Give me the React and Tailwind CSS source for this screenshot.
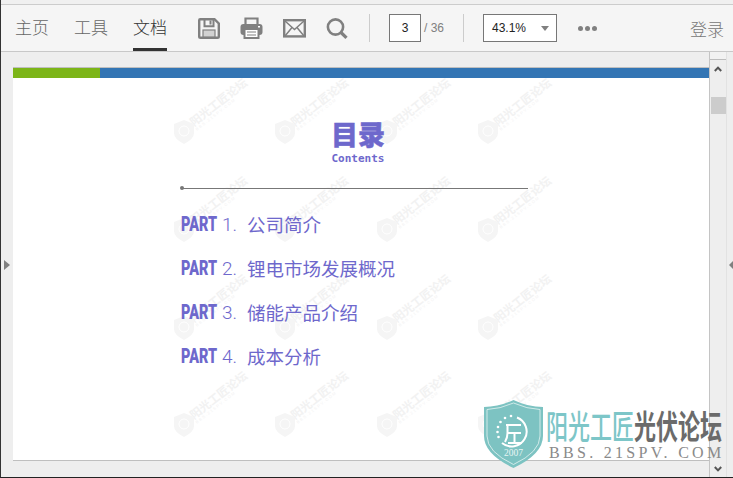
import React from "react";

const CJK = "font-['Noto_Sans_CJK_SC',sans-serif]";

const WATERMARK_X = [184, 285, 387, 488];
const WATERMARK_Y = [132, 230, 328, 425];

const ROWS = [
  { n: "1.", label: "公司简介" },
  { n: "2.", label: "锂电市场发展概况" },
  { n: "3.", label: "储能产品介绍" },
  { n: "4.", label: "成本分析" },
];

function SaveIcon() {
  return (
    <svg width="22" height="21" viewBox="0 0 22 21" fill="none" stroke="#808080" strokeWidth="2.4">
      <path d="M2.2 1.2H16.5L20.8 5.5V18.5Q20.8 19.8 19.5 19.8H2.5Q1.2 19.8 1.2 18.5V2.2Q1.2 1.2 2.2 1.2Z" />
      <path d="M6.5 1.5V8.2H15.5V1.5" strokeWidth="2" />
      <rect x="11.5" y="2.5" width="2" height="4" fill="#808080" stroke="none" />
      <rect x="5" y="12" width="12" height="7" fill="#d2d2d2" stroke="#808080" strokeWidth="1.2" />
    </svg>
  );
}

function PrintIcon() {
  return (
    <svg width="23" height="22" viewBox="0 0 23 22">
      <path d="M5.5 8V1.5H17.5V8" fill="none" stroke="#808080" strokeWidth="2.2" />
      <rect x="0.5" y="7" width="22" height="11" rx="3" fill="#808080" />
      <rect x="4.5" y="12" width="14" height="9" fill="#fff" stroke="#808080" strokeWidth="2" />
      <path d="M7 15H16M7 18H16" stroke="#808080" strokeWidth="1" />
      <rect x="18" y="9" width="2" height="1.5" fill="#fff" />
    </svg>
  );
}

function MailIcon() {
  return (
    <svg width="23" height="19" viewBox="0 0 23 19" fill="none" stroke="#808080">
      <rect x="1.2" y="1.2" width="20.6" height="16.2" strokeWidth="2.4" />
      <path d="M2 2L11.5 10.5L21 2M2 17L9 8.5M21 17L14 8.5" strokeWidth="1.5" />
    </svg>
  );
}

function SearchIcon() {
  return (
    <svg width="22" height="21" viewBox="0 0 22 21" fill="none" stroke="#808080">
      <circle cx="9.5" cy="9" r="7.6" strokeWidth="2.6" />
      <path d="M15 14.5L20.5 19.8" strokeWidth="3.2" />
    </svg>
  );
}

// x, y are the centre of the little shield, in page coordinates
function Watermark({ x, y }) {
  return (
    <div
      className="absolute flex items-center gap-[1px] rotate-[-38deg] origin-[10px_50%] text-[#f2f2f2]"
      style={{ left: x - 10, top: y - 12 }}
    >
      <svg width="20" height="24" viewBox="0 0 20 24" className="rotate-[38deg] shrink-0">
        <path d="M10 0L20 4V13Q20 19 10 24Q0 19 0 13V4Z" fill="#f5f5f5" />
        <circle cx="10" cy="11" r="5" fill="none" stroke="#fff" strokeWidth="1" />
      </svg>
      <div className="flex flex-col leading-none whitespace-nowrap">
        <span className={`text-[11.5px] font-bold ${CJK}`}>阳光工匠论坛</span>
        <span className="text-[4px] tracking-[1.4px] font-['Liberation_Sans',sans-serif]">BBS.21SPV.COM</span>
      </div>
    </div>
  );
}

function Logo() {
  return (
    <div className="absolute left-[483px] top-[400px] flex items-start">
      <svg width="59" height="68" viewBox="0 0 59 68" className="shrink-0">
        <path d="M29.5 0Q44 7 59 7V36Q59 54 29.5 68Q0 54 0 36V7Q15 7 29.5 0Z" fill="#7dc3c2" />
        <path d="M29.5 3Q43 9 56 9.5V36Q56 52 29.5 64.5Q3 52 3 36V9.5Q16 9 29.5 3Z" fill="none" stroke="#e6f4f3" strokeWidth="0.8" />
        <path d="M33 17.5A15 15 0 1 1 18 43" fill="none" stroke="#fff" strokeWidth="2" />
        <path d="M22 25H37M23.5 25V33Q23.5 38 21 42M23.5 33H37M30.5 33V43M24 43H38" fill="none" stroke="#fff" strokeWidth="2" />
        <g fill="#fff">
          <circle cx="27" cy="16" r="1.3" />
          <circle cx="21" cy="18" r="1.3" />
          <circle cx="16.5" cy="22" r="1.3" />
          <circle cx="14" cy="27" r="1.3" />
          <circle cx="13.5" cy="32" r="1.3" />
          <circle cx="14.5" cy="37" r="1.3" />
        </g>
        <text x="29.5" y="56" textAnchor="middle" fontSize="9.5" fill="#e8f5f4" fontFamily="Liberation Serif, serif">2007</text>
      </svg>
      <div className="ml-[3px] mt-[8px] flex flex-col">
        <div className={`flex h-[32px] items-center text-[22px] leading-none whitespace-nowrap scale-y-[1.5] origin-center ${CJK}`}>
          <span className="font-medium text-[#7dc6c8]">阳光工匠</span>
          <span className="font-bold text-[#6b6b6b]">光伏论坛</span>
        </div>
        <div className="mt-[7px] ml-[3px] font-['Liberation_Serif',serif] text-[16px] leading-[11px] tracking-[3.3px] text-[#8a8a8a] whitespace-nowrap">
          BBS. 21SPV. COM
        </div>
      </div>
    </div>
  );
}

function Toolbar() {
  return (
    <div className={`flex h-[47px] shrink-0 items-center border-b border-[#c8c8c8] bg-[#f5f5f5] pl-[14px] ${CJK}`}>
      <div className="flex h-full items-stretch gap-[25px] text-[17px] font-light leading-none">
        <div className="flex items-center border-b-[3px] border-transparent text-[#666]">主页</div>
        <div className="flex items-center border-b-[3px] border-transparent text-[#666]">工具</div>
        <div className="flex items-center border-b-[3px] border-[#333] text-[#333]">文档</div>
      </div>
      <div className="ml-[31px] flex items-center gap-[20px]">
        <SaveIcon />
        <PrintIcon />
        <MailIcon />
        <SearchIcon />
      </div>
      <div className="ml-[21px] h-[28px] w-px bg-[#ccc]" />
      <div className="ml-[19px] flex h-[28px] w-[32px] items-center justify-center border border-[#777] bg-white font-['Liberation_Sans',sans-serif] text-[12px] text-[#222]">
        3
      </div>
      <span className="ml-[3px] w-[21px] whitespace-nowrap font-['Liberation_Sans',sans-serif] text-[12px] text-[#808080]">/ 36</span>
      <div className="ml-[18px] h-[28px] w-px bg-[#ccc]" />
      <div className="ml-[19px] flex h-[28px] w-[74px] items-center justify-between border border-[#777] bg-white pl-[8px] pr-[7px] font-['Liberation_Sans',sans-serif] text-[12px] text-[#222]">
        43.1%
        <span className="h-0 w-0 border-x-[4px] border-t-[5px] border-x-transparent border-t-[#808080]" />
      </div>
      <div className="ml-[21px] flex gap-[2px]">
        <span className="h-[5px] w-[5px] rounded-full bg-[#808080]" />
        <span className="h-[5px] w-[5px] rounded-full bg-[#808080]" />
        <span className="h-[5px] w-[5px] rounded-full bg-[#808080]" />
      </div>
      <div className="ml-auto pr-[9px] text-[17px] font-light leading-none text-[#777]">登录</div>
    </div>
  );
}

function Scrollbar() {
  return (
    <div className="flex w-[18px] shrink-0 flex-col items-center border-x border-x-[#c4c4c4] border-r-[#e2e2e2] bg-[#eeeeee]">
      <div className="h-[8px] w-full border-b border-[#bdbdbd] bg-[#f2f2f2]" />
      <svg width="8" height="6" viewBox="0 0 8 6" className="mt-[6px]" fill="none" stroke="#555" strokeWidth="2">
        <path d="M0.8 5L4 1.6L7.2 5" />
      </svg>
      <div className="mt-[25px] h-[17px] w-[15px] bg-[#cccccc]" />
      <svg width="8" height="6" viewBox="0 0 8 6" className="mt-auto mb-[5px]" fill="none" stroke="#555" strokeWidth="2">
        <path d="M0.8 1L4 4.4L7.2 1" />
      </svg>
    </div>
  );
}

function Page() {
  return (
    <div className="relative mt-[15px] flex h-[394px] w-[696px] shrink-0 flex-col border-y border-y-[#bfbfbf] bg-white">
      <div className="flex h-[10px] shrink-0">
        <div className="w-[87px] bg-[#7cb518]" />
        <div className="flex-1 bg-[#3375b4]" />
      </div>
      {WATERMARK_Y.map((y) =>
        WATERMARK_X.map((x) => <Watermark key={`${x}-${y}`} x={x - 13} y={y - 68} />)
      )}
      <div className="relative flex w-[515px] flex-col pl-[168px]">
        <div className="flex flex-col items-center pl-[7px] text-[#6e68cc]">
          <div className={`mt-[39px] text-[27px] font-black leading-[34px] [-webkit-text-stroke:0.5px_#6e68cc] ${CJK}`}>目录</div>
          <div className="mt-px font-['DejaVu_Sans_Mono',monospace] text-[11px] font-bold leading-[13px]">Contents</div>
        </div>
        <div className="relative mt-[23px] h-px w-[347px] bg-[#777]">
          <span className="absolute left-[-1px] top-[-2px] h-[4px] w-[4px] rounded-full bg-[#777]" />
        </div>
        <div className="mt-[20px] flex flex-col gap-[14px]">
          {ROWS.map((row) => (
            <div key={row.n} className="flex h-[30px] items-center whitespace-nowrap text-[#6e68cc]">
              <span className="flex w-[41px] items-center">
                <span className="origin-left scale-x-[0.72] font-['Roboto',sans-serif] text-[20px] font-black leading-none">PART</span>
              </span>
              <span className="w-[25px] font-['Roboto',sans-serif] text-[19px] font-light leading-none">{row.n}</span>
              <span className={`text-[18.5px] leading-none ${CJK}`}>{row.label}</span>
            </div>
          ))}
        </div>
      </div>
    </div>
  );
}

export default function App() {
  return (
    <div className="relative flex h-[478px] w-[733px] flex-col overflow-hidden border-b border-l border-b-[#222] border-l-[#333] bg-[#eeeeee]">
      <div className="h-[5px] shrink-0 border-b border-[#cccccc] bg-[#f0f0f0]" />
      <Toolbar />
      <div className="flex flex-1">
        <div className="flex w-[12px] shrink-0 items-center pl-[3px]">
          <span className="h-0 w-0 border-y-[5px] border-l-[6px] border-y-transparent border-l-[#808080]" />
        </div>
        <Page />
        <Scrollbar />
        <div className="flex flex-1 items-center justify-end">
          <span className="h-0 w-0 border-y-[4px] border-r-[4px] border-y-transparent border-r-[#808080]" />
        </div>
      </div>
      <Logo />
    </div>
  );
}
